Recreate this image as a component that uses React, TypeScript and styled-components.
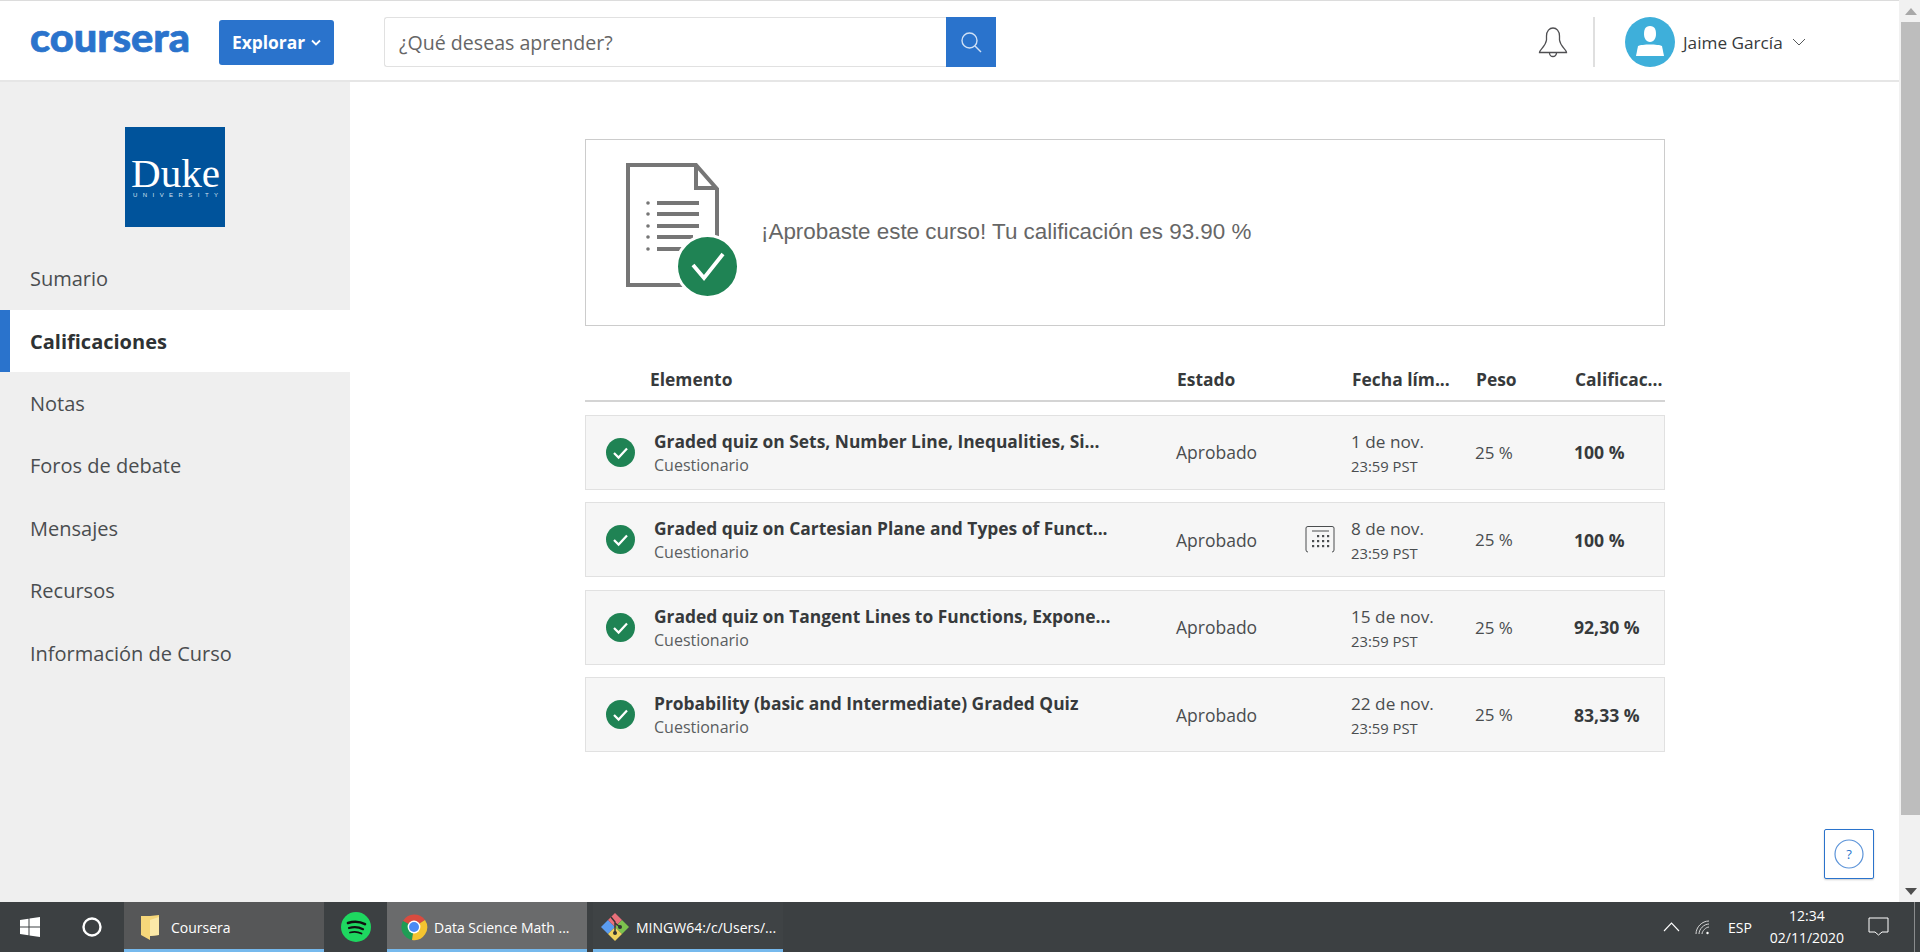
import React from "react";
import styled, { createGlobalStyle } from "styled-components";

const Global = createGlobalStyle`
  html, body { margin: 0; padding: 0; height: 100%; overflow: hidden; background: #fff; }
  * { box-sizing: border-box; }
  body { font-family: "Open Sans", "Liberation Sans", sans-serif; color: #373a3c; }
`;

const Page = styled.div`
  width: 1920px; height: 952px; display: flex; flex-direction: column; position: relative;
`;
const Upper = styled.div`
  flex: 1; min-height: 0; display: flex;
`;
const Viewport = styled.div`
  flex: 1; min-width: 0; display: flex; flex-direction: column;
`;
const Header = styled.header`
  height: 82px; display: flex; align-items: center; border-top: 1px solid #dcdcdc; border-bottom: 2px solid #e6e6e6;
  padding: 3px 0 0 30px; background: #fff;
`;
const LogoMark = styled.svg`
  width: 160px; height: 50px; display: block; margin-top: -3px; overflow: visible;
`;
const ExploreButton = styled.button`
  width: 115px; height: 45px; margin-left: 29px; border: 0; border-radius: 3px; background: #2a73cc; color: #fff;
  display: flex; align-items: center; justify-content: center; gap: 6px; padding: 0;
  font: 700 17.4px "Open Sans", sans-serif;
`;
const SearchBox = styled.div`
  width: 612px; height: 50px; margin-left: 50px; display: flex;
`;
const SearchField = styled.div`
  flex: 1; border: 1px solid #e1e1e1; border-right: 0; border-radius: 3px 0 0 3px; display: flex; align-items: center;
  padding-left: 14px; font: 400 19.6px "Open Sans", sans-serif; color: #666;
`;
const SearchButton = styled.div`
  width: 50px; background: #2a73cc; display: flex; align-items: center; justify-content: center;
`;
const HeaderRight = styled.div`
  margin-left: auto; display: flex; align-items: center; width: 361px;
`;
const Divider = styled.div`
  width: 2px; height: 50px; background: #dfdfdf; margin-left: 25px;
`;
const Avatar = styled.div`
  width: 50px; height: 50px; border-radius: 50%; background: #3eafda; margin-left: 30px; display: flex; align-items: center; justify-content: center;
`;
const UserName = styled.span`
  margin-left: 8px; font-size: 17.2px; color: #373a3c;
`;
const UserCaret = styled.span`
  margin-left: 9px; display: flex;
`;
const Body = styled.div`
  flex: 1; min-height: 0; display: flex;
`;
const Sidebar = styled.nav`
  width: 350px; background: #efefef; display: flex; flex-direction: column; padding-top: 45px;
`;
const SchoolLogo = styled.svg`
  width: 100px; height: 100px; display: block; align-self: center; margin-bottom: 20.6px; flex: none; overflow: visible;
`;
const NavItem = styled.div<{ $active?: boolean }>`
  height: 62.4px; display: flex; align-items: center; padding-left: ${p => (p.$active ? "20px" : "30px")};
  font-size: 20px; font-weight: ${p => (p.$active ? 700 : 400)}; color: ${p => (p.$active ? "#2e3234" : "#4a4d4f")};
  background: ${p => (p.$active ? "#fff" : "transparent")};
  border-left: ${p => (p.$active ? "10px solid #2a73cc" : "0")};
`;
const Content = styled.main`
  flex: 1; padding: 57px 0 0 235px;
`;
const Banner = styled.section`
  width: 1080px; height: 187px; border: 1px solid #cccccc; display: flex; align-items: center; padding-left: 40px;
`;
const BannerGraphic = styled.svg`
  width: 112px; height: 134px; display: block; flex: none; margin-top: -5px;
`;
const BannerText = styled.div`
  margin-left: 23px; margin-top: -1px; font: 400 22.4px "Liberation Sans", sans-serif; color: #666;
`;
const Table = styled.section`
  width: 1080px; margin-top: 36px;
`;
const TableHead = styled.div`
  height: 40px; display: grid; grid-template-columns: 592px 175px 124px 99px 90px; border-bottom: 2px solid #d4d4d4;
  font-size: 17.4px; font-weight: 700; color: #373a3c; align-items: start; line-height: 34px;
`;
const HeadCell = styled.div<{ $first?: boolean }>`
  padding-left: ${p => (p.$first ? "65px" : "0")}; white-space: nowrap; overflow: hidden;
`;
const Rows = styled.div`
  display: flex; flex-direction: column; gap: 12.5px; padding-top: 12.5px;
`;
const Row = styled.div`
  height: 75px; background: #f6f6f6; border: 1px solid #e1e1e1; display: grid;
  grid-template-columns: 590px 175px 124px 99px 90px; align-items: center;
`;
const ItemCell = styled.div`
  display: flex; align-items: center; padding-left: 20px;
`;
const ItemText = styled.div`
  margin-left: 19px; width: 500px; padding-top: 1px;
`;
const ItemTitle = styled.div`
  font-size: 17.4px; font-weight: 700; line-height: 24px; color: #373a3c; white-space: nowrap;
`;
const ItemType = styled.div`
  font-size: 16px; line-height: 24px; color: #5a5d5f;
`;
const StatusCell = styled.div`
  font-size: 17.5px; color: #4a4d4f; display: flex; align-items: center; justify-content: space-between; padding-right: 16px; padding-top: 0;
`;
const DateCell = styled.div`
  display: flex; flex-direction: column; padding-top: 3px;
`;
const DateText = styled.div`
  font-size: 17.2px; line-height: 25px; color: #4a4d4f;
`;
const TimeText = styled.div`
  font-size: 14.8px; line-height: 25px; color: #4a4d4f;
`;
const WeightCell = styled.div`
  font-size: 17px; color: #4a4d4f;
`;
const GradeCell = styled.div`
  font-size: 17.6px; font-weight: 700; color: #373a3c;
`;
const Scrollbar = styled.div`
  width: 21px; background: #f1f1f1; display: flex; flex-direction: column; align-items: center; padding-left: 2px;
`;
const ScrollArrow = styled.div`
  height: 22px; width: 100%; display: flex; align-items: center; justify-content: center;
`;
const ScrollThumb = styled.div`
  width: 100%; height: 793px; background: #bdbdbd;
`;
const ScrollTrack = styled.div`
  flex: 1;
`;
const HelpButton = styled.div`
  position: absolute; left: 1824px; top: 829px; width: 50px; height: 50px; background: #fff; border: 1px solid #2a73cc; border-radius: 2px;
  box-shadow: 0 1px 2px rgba(0,0,0,.2); display: flex; align-items: center; justify-content: center;
`;
const Taskbar = styled.footer`
  height: 50px; background: #3c4042; display: flex; align-items: stretch; color: #fff; font: 400 14px "Open Sans", sans-serif; position: relative;
`;
const TaskIconSlot = styled.div<{ $w: number }>`
  width: ${p => p.$w}px; display: flex; align-items: center; justify-content: center; padding-bottom: 1px;
`;
const TaskApp = styled.div<{ $w: number; $bg: string; $pad: number; $gap: number; $ml?: number }>`
  width: ${p => p.$w}px; margin-left: ${p => p.$ml ?? 0}px; background: ${p => p.$bg}; border-bottom: 3px solid #76b9ed; display: flex; align-items: center;
  padding-left: ${p => p.$pad}px; gap: ${p => p.$gap}px;
  font: 400 14px "Open Sans", sans-serif; white-space: nowrap; overflow: hidden; padding-top: 3px;
`;
const Tray = styled.div`
  margin-left: auto; display: flex; align-items: center; width: 260px; padding-left: 3px; position: relative;
`;
const WifiIcon = styled.svg`
  margin-left: 15px; display: block;
`;
const TrayLang = styled.span`
  font-size: 14px; margin-left: 18px;
`;
const Clock = styled.div`
  width: 90px; margin-left: 10px; text-align: center; font-size: 14px; line-height: 22px;
`;
const TrayNote = styled.div`
  margin-left: 16px; display: flex;
`;
const TrayEdge = styled.div`
  position: absolute; right: 5px; top: 0; bottom: 0; width: 1px; background: #8a8c8d;
`;

const rows = [
  { t: "Graded quiz on Sets, Number Line, Inequalities, Si...", d: "1 de nov.", g: "100 %" },
  { t: "Graded quiz on Cartesian Plane and Types of Funct...", d: "8 de nov.", g: "100 %", cal: true },
  { t: "Graded quiz on Tangent Lines to Functions, Expone...", d: "15 de nov.", g: "92,30 %" },
  { t: "Probability (basic and Intermediate) Graded Quiz", d: "22 de nov.", g: "83,33 %" },
];

const nav = ["Sumario", "Calificaciones", "Notas", "Foros de debate", "Mensajes", "Recursos", "Información de Curso"];

const Check = () => (
  <svg width="29" height="29" viewBox="0 0 29 29"><circle cx="14.5" cy="14.5" r="14.5" fill="#1f8354"/><path d="M8 15l4.6 4.6L21 10.5" fill="none" stroke="#fff" strokeWidth="2.2"/></svg>
);
const DocIcon = () => (
  <BannerGraphic viewBox="0 0 112 134">
    <path d="M2 2H70L91 26V122H2Z" fill="#fff" stroke="#767676" strokeWidth="4"/>
    <path d="M70 2V25H91" fill="none" stroke="#767676" strokeWidth="4"/>
    <g fill="#767676">
      {[40,51,63,74,86].map((y,i)=>(<g key={y}><circle cx="22" cy={y} r="1.8"/><rect x="31" y={y-2} width={i<3?42:i===3?36:30} height="4"/></g>))}
    </g>
    <circle cx="81.5" cy="103.5" r="31" fill="#1f8354" stroke="#fff" strokeWidth="3"/>
    <path d="M67 102l11 13 19-24" fill="none" stroke="#fff" strokeWidth="3.8"/>
  </BannerGraphic>
);
const CalIcon = () => (
  <svg width="30" height="29" viewBox="0 0 30 29" fill="none" stroke="#4a4d4f">
    <path d="M3 1.5H27" /><path d="M1 25V3Q1 1.5 3 1.5M29 25V3Q29 1.5 27 1.5M1 25Q1 27 3 27M29 25Q29 27 27 27" />
    <path d="M7 6H24"/>
    <g fill="#4a4d4f" stroke="none">
      {[[12,10],[17,10],[22,10],[7,15],[12,15],[17,15],[22,15],[7,20],[12,20],[17,20],[22,20]].map(([x,y])=>(<rect key={x+"-"+y} x={x} y={y} width="2.2" height="2.2"/>))}
    </g>
  </svg>
);

export default function App() {
  return (
    <Page>
      <Global />
      <Upper>
        <Viewport>
          <Header>
            <LogoMark viewBox="0 0 160 50">
              <text x="0" y="36" textLength="160" lengthAdjust="spacingAndGlyphs" fontFamily="Lato, sans-serif" fontWeight="900" fontSize="40" fill="#2a73cc" stroke="#2a73cc" strokeWidth="0.7">coursera</text>
            </LogoMark>
            <ExploreButton>
              Explorar
              <svg width="10" height="7" viewBox="0 0 10 7"><path d="M1 1.5l4 4 4-4" fill="none" stroke="#fff" strokeWidth="1.8"/></svg>
            </ExploreButton>
            <SearchBox>
              <SearchField>¿Qué deseas aprender?</SearchField>
              <SearchButton>
                <svg width="22" height="22" viewBox="0 0 22 22" fill="none" stroke="#cfe0f5" strokeWidth="1.4"><circle cx="9.5" cy="9.5" r="7.5"/><path d="M15 15l6 6"/></svg>
              </SearchButton>
            </SearchBox>
            <HeaderRight>
              <svg width="30" height="31" viewBox="0 0 30 31" fill="none" stroke="#4f4f52" strokeWidth="1.3">
                <path d="M1.5 25.5C1.5 22.5 7.5 20 8.5 13V9C8.5 4 11.5 1 15 1S21.5 4 21.5 9V13C22.5 20 28.5 22.5 28.5 25.5Z"/>
                <path d="M11.5 26a3.5 3.5 0 0 0 7 0"/>
              </svg>
              <Divider />
              <Avatar>
                <svg width="30" height="32" viewBox="0 0 30 32" fill="#fff"><path d="M15 0C10 0 9 4 9 8s2 8 6 8 6-4 6-8-1-8-6-8Z"/><path d="M3 20c4-2 20-2 24 0l2 10H1Z"/></svg>
              </Avatar>
              <UserName>Jaime García</UserName>
              <UserCaret>
                <svg width="14" height="8" viewBox="0 0 14 8"><path d="M1 1l6 6 6-6" fill="none" stroke="#55585a" strokeWidth="1"/></svg>
              </UserCaret>
            </HeaderRight>
          </Header>
          <Body>
            <Sidebar>
              <SchoolLogo viewBox="0 0 100 100">
                <rect width="100" height="100" fill="#00539b"/>
                <text x="6" y="60" textLength="89" lengthAdjust="spacingAndGlyphs" fontFamily="Liberation Serif, serif" fontSize="41" fill="#fff">Duke</text>
                <text x="8" y="70" textLength="85" fontFamily="Liberation Sans, sans-serif" fontSize="6" fill="#d5e2ef">UNIVERSITY</text>
              </SchoolLogo>
              {nav.map(n => <NavItem key={n} $active={n === "Calificaciones"}>{n}</NavItem>)}
            </Sidebar>
            <Content>
              <Banner>
                <DocIcon />
                <BannerText>¡Aprobaste este curso! Tu calificación es 93.90 %</BannerText>
              </Banner>
              <Table>
                <TableHead>
                  <HeadCell $first>Elemento</HeadCell>
                  <HeadCell>Estado</HeadCell>
                  <HeadCell>Fecha lím...</HeadCell>
                  <HeadCell>Peso</HeadCell>
                  <HeadCell>Calificac...</HeadCell>
                </TableHead>
                <Rows>
                  {rows.map(r => (
                    <Row key={r.t}>
                      <ItemCell>
                        <Check />
                        <ItemText>
                          <ItemTitle>{r.t}</ItemTitle>
                          <ItemType>Cuestionario</ItemType>
                        </ItemText>
                      </ItemCell>
                      <StatusCell>Aprobado{r.cal && <CalIcon />}</StatusCell>
                      <DateCell>
                        <DateText>{r.d}</DateText>
                        <TimeText>23:59 PST</TimeText>
                      </DateCell>
                      <WeightCell>25 %</WeightCell>
                      <GradeCell>{r.g}</GradeCell>
                    </Row>
                  ))}
                </Rows>
              </Table>
            </Content>
          </Body>
        </Viewport>
        <Scrollbar>
          <ScrollArrow><svg width="12" height="7" viewBox="0 0 12 7"><path d="M6 0l6 7H0Z" fill="#a8a8a8"/></svg></ScrollArrow>
          <ScrollThumb />
          <ScrollTrack />
          <ScrollArrow><svg width="12" height="7" viewBox="0 0 12 7"><path d="M6 7L0 0h12Z" fill="#4f4f4f"/></svg></ScrollArrow>
        </Scrollbar>
      </Upper>
      <HelpButton>
        <svg width="30" height="30" viewBox="0 0 30 30"><circle cx="15" cy="15" r="14" fill="none" stroke="#5b93d8" strokeWidth="1.2"/><text x="15" y="20" textAnchor="middle" fontSize="13" fontFamily="Open Sans" fill="#2a73cc">?</text></svg>
      </HelpButton>
      <Taskbar>
        <TaskIconSlot $w={60}>
          <svg width="20" height="20" viewBox="0 0 20 20" fill="#fff"><path d="M0 3l8.5-1.2V9.5H0ZM9.5 1.6L20 0V9.5H9.5ZM0 10.5H8.5V18.2L0 17ZM9.5 10.5H20V20L9.5 18.4Z"/></svg>
        </TaskIconSlot>
        <TaskIconSlot $w={64}>
          <svg width="20" height="20" viewBox="0 0 20 20"><circle cx="10" cy="10" r="8.5" fill="none" stroke="#fff" strokeWidth="2.4"/></svg>
        </TaskIconSlot>
        <TaskApp $w={200} $bg="#565758" $pad={17} $gap={12}>
          <svg width="18" height="26" viewBox="0 0 18 26"><path d="M0 2H9L18 1V21L9 22V26L0 21Z" fill="#f6d77a"/><path d="M9 6L18 3V21L9 22Z" fill="#fbe9a8"/></svg>
          Coursera
        </TaskApp>
        <TaskIconSlot $w={63}>
          <svg width="30" height="30" viewBox="0 0 30 30"><circle cx="15" cy="15" r="15" fill="#1ed760"/><g fill="none" stroke="#111" strokeLinecap="round"><path d="M7 11c6-2 12-1.5 17 1.2" strokeWidth="2.6"/><path d="M8 16c5-1.6 10-1 14 1.2" strokeWidth="2.2"/><path d="M9 20.5c4-1.2 8-.8 11.5 1" strokeWidth="1.8"/></g></svg>
        </TaskIconSlot>
        <TaskApp $w={200} $bg="#6a6b6c" $pad={13} $gap={6}>
          <svg width="28" height="28" viewBox="0 0 28 28">
            <path d="M14 14L3 8A13 13 0 0 1 25 7Z" fill="#d94b3f"/>
            <path d="M14 14L3 8A13 13 0 0 0 12 27Z" fill="#1f9d55"/>
            <path d="M14 14L25 7A13 13 0 0 1 12 27Z" fill="#f4c430"/>
            <circle cx="14" cy="14" r="6.4" fill="#fff"/><circle cx="14" cy="14" r="5" fill="#4a8af4"/>
          </svg>
          Data Science Math ...
        </TaskApp>
        <TaskApp $w={190} $ml={6} $bg="#3f4345" $pad={7} $gap={6}>
          <svg width="30" height="30" viewBox="0 0 30 30">
            <path d="M15 15L8 8 1 15 8 22Z" fill="#5b9cf0"/>
            <path d="M15 15L8 8 15 1 22 8Z" fill="#e9707a"/>
            <path d="M15 15L22 8 29 15 22 22Z" fill="#7cc24e"/>
            <path d="M15 15L8 22 15 29 22 22Z" fill="#f0d25e"/>
            <path d="M11 5l4 5v10M15 11l5 4" stroke="#333" strokeWidth="1.4" fill="none"/>
            <circle cx="20" cy="15" r="2" fill="#333"/><circle cx="15" cy="21" r="2" fill="#333"/>
          </svg>
          MINGW64:/c/Users/...
        </TaskApp>
        <Tray>
          <svg width="17" height="10" viewBox="0 0 17 10"><path d="M1 9l7.5-8L16 9" fill="none" stroke="#fff" strokeWidth="1.1"/></svg>
          <WifiIcon width="15" height="15" viewBox="0 0 15 15" fill="none" stroke="#d8d8d8" strokeWidth="1">
            <path d="M1 14C1 7 7 1 14 1"/><path d="M4 14C4 9 9 4 14 4"/><path d="M7 14C7 11 11 7 14 7"/><circle cx="12.5" cy="13" r="1.2" fill="#fff" stroke="none"/>
          </WifiIcon>
          <TrayLang>ESP</TrayLang>
          <Clock>12:34<br />02/11/2020</Clock>
          <TrayNote>
            <svg width="21" height="20" viewBox="0 0 21 20"><path d="M1 1H20V15H14L10.5 18 7 15H1Z" fill="none" stroke="#fff" strokeWidth="1"/></svg>
          </TrayNote>
          <TrayEdge />
        </Tray>
      </Taskbar>
    </Page>
  );
}
